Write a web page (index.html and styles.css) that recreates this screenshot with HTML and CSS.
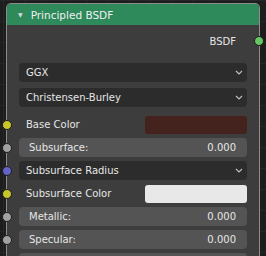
FILE: index.html
```html
<!DOCTYPE html>
<html lang="en">
<head>
    <meta charset="UTF-8">
    <title>Principled BSDF</title>
    <link rel="stylesheet" href="styles.css">
</head>
<body>
    <div class="node">
        <div class="node-header"><span class="collapse">&#9660;</span>Principled BSDF</div>
        <div class="output-row">BSDF<span class="socket socket-shader"></span></div>
        <div class="props">
            <div class="dropdown">GGX<svg class="chevron" width="8" height="5" viewBox="0 0 8 5"><path d="M1 1 L4 4 L7 1" fill="none" stroke="#bdbdbd" stroke-width="1.2"/></svg></div>
            <div class="dropdown">Christensen-Burley<svg class="chevron" width="8" height="5" viewBox="0 0 8 5"><path d="M1 1 L4 4 L7 1" fill="none" stroke="#bdbdbd" stroke-width="1.2"/></svg></div>
        </div>
        <div class="inputs">
            <div class="input-row">
                <span class="socket socket-color"></span>
                <span class="label">Base Color</span>
                <span class="swatch swatch-base"></span>
            </div>
            <div class="input-row slider">
                <span class="socket socket-value"></span>
                <span>Subsurface:</span><span>0.000</span>
            </div>
            <div class="input-row dropdown">
                <span class="socket socket-vector"></span>
                Subsurface Radius<svg class="chevron" width="8" height="5" viewBox="0 0 8 5"><path d="M1 1 L4 4 L7 1" fill="none" stroke="#bdbdbd" stroke-width="1.2"/></svg>
            </div>
            <div class="input-row">
                <span class="socket socket-color"></span>
                <span class="label">Subsurface Color</span>
                <span class="swatch swatch-white"></span>
            </div>
            <div class="input-row slider">
                <span class="socket socket-value"></span>
                <span>Metallic:</span><span>0.000</span>
            </div>
            <div class="input-row slider">
                <span class="socket socket-value"></span>
                <span>Specular:</span><span>0.000</span>
            </div>
            <div class="input-row slider">
                <span class="socket socket-value"></span>
            </div>
        </div>
    </div>
</body>
</html>
```

FILE: styles.css
```css
body {
    margin: 0;
    height: 256px;
    overflow: hidden;
    font-family: 'DejaVu Sans', sans-serif;
    font-size: 10px;
    color: #e6e6e6;
    background-color: #1d1d1d;
    background-image:
        linear-gradient(to right, #262626 1px, transparent 1px),
        linear-gradient(to bottom, #262626 1px, transparent 1px);
    background-size: 21px 21px;
    background-position: 3px 0;
}
.node {
    margin: 4px 0 0 7px;
    width: 252px;
    height: 270px;
    box-sizing: border-box;
    background: #3d3d3d;
    border-radius: 4px 4px 0 0;
    box-shadow: 0 0 0 1px #8c8c8c;
}
.node-header {
    height: 21px;
    display: flex;
    align-items: center;
    padding-left: 11px;
    background: #2e8a5a;
    border-radius: 4px 4px 0 0;
    font-size: 10.5px;
    color: #f0f0f0;
}
.collapse {
    font-size: 6px;
    margin-right: 8px;
    color: #d8d8d8;
}
.output-row {
    position: relative;
    height: 24px;
    margin-top: 4px;
    display: flex;
    align-items: center;
    justify-content: flex-end;
    padding-right: 23px;
}
.props {
    display: flex;
    flex-direction: column;
    gap: 6px;
    padding: 10px 12px 0;
}
.dropdown {
    position: relative;
    height: 19px;
    display: flex;
    align-items: center;
    justify-content: space-between;
    padding: 0 4px 0 7px;
    background: #2c2c2c;
    border-radius: 4px;
}
.inputs {
    display: flex;
    flex-direction: column;
    gap: 4px;
    padding: 8px 12px 0;
}
.input-row {
    position: relative;
    height: 19px;
    display: flex;
    align-items: center;
}
.label {
    width: 119px;
    padding-left: 7px;
}
.swatch {
    flex: 1;
    height: 18px;
    border-radius: 3px;
}
.swatch-base {
    background: #44231e;
}
.swatch-white {
    background: #e8e8e8;
}
.slider {
    justify-content: space-between;
    padding: 0 11px 0 10px;
    background: #545454;
    border-radius: 4px;
}
.socket {
    position: absolute;
    left: -17px;
    top: 5px;
    width: 8px;
    height: 8px;
    border-radius: 50%;
    border: 1px solid #1e1e1e;
}
.output-row .socket {
    left: auto;
    right: -5px;
    top: 7px;
}
.socket-shader {
    background: #63c763;
}
.socket-color {
    background: #c7c729;
}
.socket-value {
    background: #a1a1a1;
}
.socket-vector {
    background: #6363c7;
}
```
